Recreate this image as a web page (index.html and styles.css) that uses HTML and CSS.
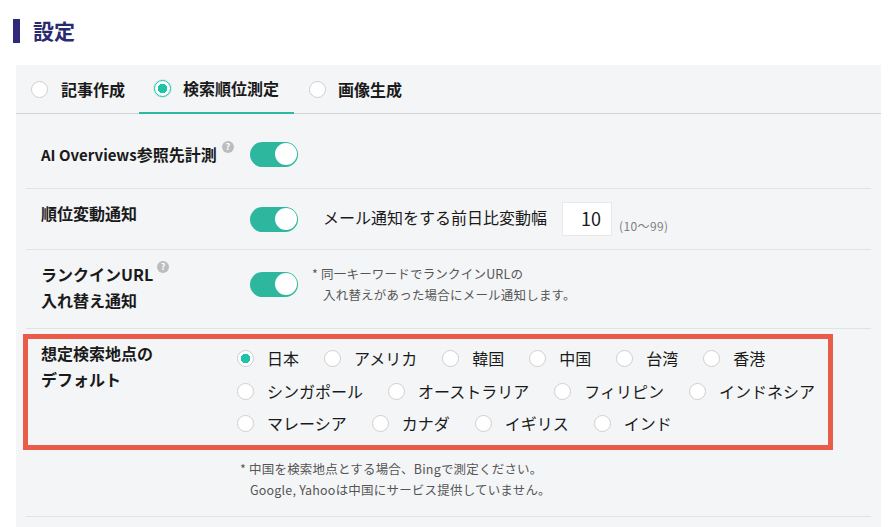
FILE: index.html
```html
<!DOCTYPE html>
<html lang="ja">
<head>
<meta charset="utf-8">
<title>設定</title>
<link rel="stylesheet" href="styles.css">
</head>
<body>
<h1 class="title">設定</h1>
<section class="panel">
  <div class="tabs">
    <div class="tab"><span class="radio"></span><span>記事作成</span></div>
    <div class="tab tab-active"><span class="radio radio-on radio-ring"></span><span>検索順位測定</span></div>
    <div class="tab tab-last"><span class="radio"></span><span>画像生成</span></div>
  </div>
  <div class="row row-ai">
    <div class="label"><span><span class="latin">AI Overviews</span>参照先計測</span><span class="help">?</span></div>
    <span class="toggle"></span>
  </div>
  <div class="row row-notify">
    <div class="label">順位変動通知</div>
    <span class="toggle"></span>
    <span class="field-text">メール通知をする前日比変動幅</span>
    <span class="num">10</span>
    <span class="range">(10〜99)</span>
  </div>
  <div class="row row-rank">
    <div class="label"><span>ランクインURL</span><span class="help help-rank">?</span><br>入れ替え通知</div>
    <span class="toggle"></span>
    <p class="note note-rank">* 同一キーワードでランクインURLの<br><span class="indent">入れ替えがあった場合にメール通知します。</span></p>
  </div>
  <div class="row-location">
    <div class="highlight">
      <div class="label label-loc">想定検索地点の<br>デフォルト</div>
      <div class="options">
        <div class="opts-line">
          <label class="opt"><span class="radio radio-on"></span>日本</label>
          <label class="opt"><span class="radio"></span>アメリカ</label>
          <label class="opt"><span class="radio"></span>韓国</label>
          <label class="opt"><span class="radio"></span>中国</label>
          <label class="opt"><span class="radio"></span>台湾</label>
          <label class="opt"><span class="radio"></span>香港</label>
        </div>
        <div class="opts-line">
          <label class="opt"><span class="radio"></span>シンガポール</label>
          <label class="opt"><span class="radio"></span>オーストラリア</label>
          <label class="opt"><span class="radio"></span>フィリピン</label>
          <label class="opt"><span class="radio"></span>インドネシア</label>
        </div>
        <div class="opts-line">
          <label class="opt"><span class="radio"></span>マレーシア</label>
          <label class="opt"><span class="radio"></span>カナダ</label>
          <label class="opt"><span class="radio"></span>イギリス</label>
          <label class="opt"><span class="radio"></span>インド</label>
        </div>
      </div>
    </div>
    <p class="note note-loc">* 中国を検索地点とする場合、Bingで測定ください。<br><span class="indent">Google, Yahooは中国にサービス提供していません。</span></p>
  </div>
</section>
</body>
</html>
```

FILE: styles.css
```css
* { box-sizing: border-box; }
html, body { margin: 0; height: 527px; overflow: hidden; background: #fff; }
body {
  font-family: "Noto Sans CJK JP", "Noto Sans", sans-serif;
  color: #1a1a1a;
  padding: 19px 14px 0 13px;
}
.title {
  margin: 0 0 22px;
  height: 24px;
  border-left: 7px solid #2f2a7c;
  padding-left: 13px;
  font-size: 21px;
  line-height: 22px;
  font-weight: 700;
  color: #2a2a72;
}
.panel {
  margin-left: 3px;
  width: 865px;
  height: 470px;
  background: #f4f5f7;
}
.tabs {
  display: flex;
  height: 49px;
  border-bottom: 1px solid #d2d4d8;
  padding-left: 15px;
}
.tab {
  display: flex;
  align-items: center;
  gap: 13px;
  height: 48px;
  padding: 0 14px 0 0;
  font-size: 16px;
  font-weight: 700;
}
.tab-active {
  height: 49px;
  border-bottom: 2px solid #2bb9a0;
  padding: 0 15px 1px 15px;
  margin-right: 15px;
  gap: 12px;
}
.tab-last { gap: 12px; }
.radio {
  flex: none;
  display: inline-block;
  width: 17px;
  height: 17px;
  border-radius: 50%;
  background: #fff;
  border: 1px solid #cfcfcf;
}
.radio-on {
  background: radial-gradient(circle, #1fc4a8 0 4.5px, #fff 5px);
}
.radio-ring { border-color: #23bdb0; box-shadow: 0 0 0 1px #cdeeea; }
.row {
  display: flex;
  margin: 0 10px;
  border-bottom: 1px solid #e1e2e5;
  align-items: flex-start;
}
.label {
  flex: none;
  width: 224px;
  padding-left: 15px;
  font-size: 16px;
  font-weight: 700;
  line-height: 26px;
}
.latin { font-size: 15px; }
.row-ai { height: 75px; padding-top: 28px; }
.row-notify { height: 61px; padding-top: 13px; }
.row-rank { height: 79px; padding-top: 11px; }
.row-ai .label { margin-top: -1px; }
.row-notify .label { margin-top: -2px; }
.help {
  display: inline-block;
  width: 12px;
  height: 12px;
  border-radius: 50%;
  background: #bdbdbd;
  color: #fff;
  font-size: 9px;
  font-weight: 700;
  line-height: 12px;
  text-align: center;
  vertical-align: 11px;
  margin-left: 5px;
  margin-bottom: -5px;
}
.help-rank { margin-left: 4px; }
.toggle {
  flex: none;
  position: relative;
  width: 48px;
  height: 25px;
  border-radius: 13px;
  background: #2db79f;
}
.toggle::after {
  content: "";
  position: absolute;
  right: 1px;
  top: 1px;
  width: 22px;
  height: 22px;
  border-radius: 50%;
  background: #fff;
}
.row-notify .toggle { margin-top: 5px; }
.row-rank .toggle { margin-top: 11px; }
.field-text {
  margin-left: 25px;
  margin-top: 3px;
  font-size: 16px;
  line-height: 24px;
}
.num {
  width: 50px;
  height: 34px;
  margin-left: 15px;
  background: #fff;
  border: 1px solid #e8e9ec;
  font-size: 18px;
  line-height: 30px;
  text-align: right;
  padding-right: 10px;
}
.range {
  margin: 15px 0 0 7px;
  font-size: 12px;
  line-height: 18px;
  color: #808080;
  letter-spacing: 0.4px;
}
.note {
  margin: 0;
  font-size: 12.5px;
  letter-spacing: 0.2px;
  line-height: 21px;
  color: #555;
}
.indent { padding-left: 11px; }
.note-rank { margin: 2px 0 0 14px; }
.row-location {
  margin: 5px 10px 0;
  height: 183px;
  border-bottom: 1px solid #e1e2e5;
}
.highlight {
  margin-left: -3px;
  width: 810px;
  height: 116px;
  border: 5px solid #ea5c4a;
  display: flex;
  padding-top: 1px;
}
.label-loc { width: 209px; padding-left: 13px; }
.options {
  display: flex;
  flex-direction: column;
  margin-top: 7px;
}
.opts-line {
  display: flex;
  height: 33px;
  gap: 25px;
}
.opt {
  display: flex;
  align-items: flex-start;
  gap: 13px;
  font-size: 16px;
  line-height: 22px;
}
.opt .radio { margin-top: 3px; }
.note-loc { margin: 8px 0 0 214px; }
.note-loc .indent { padding-left: 10px; }
```
